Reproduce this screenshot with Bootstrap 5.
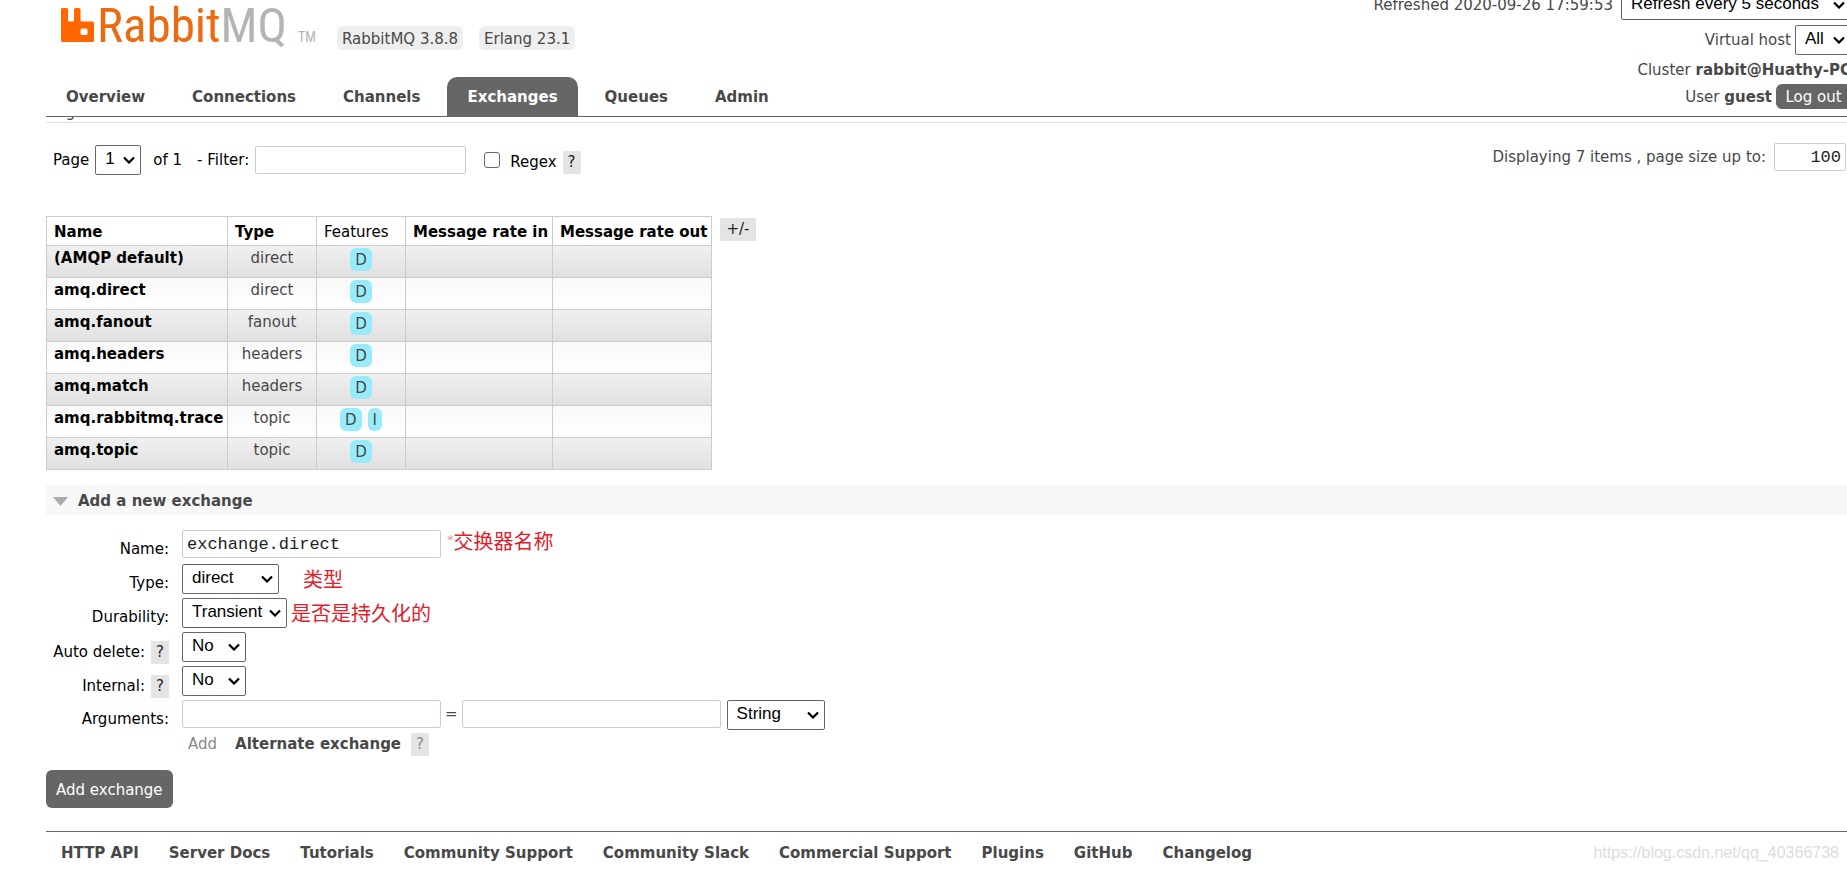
<!DOCTYPE html>
<html lang="en">
<head>
<meta charset="utf-8">
<meta name="viewport" content="width=device-width, initial-scale=1">
<title>RabbitMQ Management</title>
<link href="https://cdn.jsdelivr.net/npm/bootstrap@5.3.0/dist/css/bootstrap.min.css" rel="stylesheet">
<style>
  body { font: 15px/20px "DejaVu Sans", Verdana, sans-serif; color: #484848; background: #fff; overflow-x: hidden; }
  a { color: #484848; text-decoration: none; }
  .page { margin-left: 46px; }
  .top { height: 117px; border-bottom: 1px solid #666; }
  .logo { width: 260px; height: 60px; overflow: visible; }
  .logo text { font-family: "Roboto Condensed", "Liberation Sans", sans-serif; }
  .brand-row { padding-left: 15px; gap: 16px; height: 77px; }
  .version { background: #eee; border-radius: 6px; padding: 3px 5px 1px; height: 24px; margin-top: 26px; }
  .tabs .nav-link { color: #484848; font-weight: bold; padding: 10px 20px 9px; line-height: 20px; border-radius: 10px 10px 0 0; margin-right: 7px; }
  .tabs .nav-link.active { background: #666; color: #fff; }
  .session { margin: -10px -4px 0 0; }
  .session li { min-height: 24px; }
  .session li.tall { min-height: 35px; }
  .session .tall label { padding-top: 5px; }
  .logout { height: 25px; width: 75px; padding: 0; border-radius: 6px; }
  .field, .pick { border-radius: 2px; color: #000; padding: 2px 4px; background-color: #fff; }
  .field { border: 1px solid #ccc; font: 17px/22px "Liberation Mono", monospace; height: 28px; width: 259px; color: #222; }
  .pick { appearance: none; border: 1px solid #666; font: 17px/24px "Liberation Sans", Arial, sans-serif; height: 30px; padding: 0 9px 2px;
    background: #fff url("data:image/svg+xml,%3Csvg xmlns='http://www.w3.org/2000/svg' viewBox='0 0 12 8'%3E%3Cpath d='M1 1.5l5 5 5-5' fill='none' stroke='%23000' stroke-width='2.2'/%3E%3C/svg%3E") no-repeat right 5px center / 12px 8px; }
  .w-46 { width: 46px; } .w-56 { width: 56px; } .w-64 { width: 64px; } .w-97 { width: 97px; } .w-105 { width: 105px; } .w-230 { width: 230px; }
  .w-211 { width: 211px; } .w-72 { width: 72px; } .w-98 { width: 98px; }
  .hint { background: #e4e4e4; color: #222; border: 0; padding: 2px 5px; height: 23px; line-height: 19px; display: inline-block; }
  .clipped { height: 6px; overflow: hidden; border-bottom: 1px solid #ddd; }
  .clipped h2 { font-size: 15px; line-height: 20px; margin: 0 0 0 2px; }
  .pager { padding: 20px 1px 0 7px; height: 93px; color: #000; }
  .pager .paging { padding-top: 2px; gap: 6px; }
  .pager .shown { color: #484848; }
  .count { margin: 0 9px 0 6px; }
  .tick { width: 16px; height: 16px; margin: 0 4px 0 12px; border: 1px solid #666; border-radius: 3px; appearance: none; background: #fff; }
  .list { border-collapse: collapse; table-layout: fixed; width: 666px; color: #484848; }
  .list th, .list td { border: 1px solid #ccc; padding: 2px 7px 0; vertical-align: top; height: 32px; white-space: nowrap; }
  .list thead th { height: 29px; padding-top: 5px; color: #000; }
  .list tbody th a { color: #000; }
  .list tbody tr:nth-child(odd) { background: linear-gradient(#f0f0f0, #e0e0e0); }
  .list tbody tr:nth-child(even) { background: linear-gradient(#f8f8f8, #fff); }
  .list td { text-align: center; }
  .list td .flags { display: flex; justify-content: center; gap: 6px; }
  .list .c-name { width: 181px; } .list .c-short { width: 89px; } .list .c-in { width: 147px; } .list .c-out { width: 159px; }
  .columns-toggle { margin-top: 2px; width: 36px; }
  .flag { background: #98ebfb; border-radius: 6px; padding: 2px 5px; height: 23px; }
  .section-head { background: #f8f8f8; font-size: 15px; line-height: 20px; font-weight: bold; padding: 6px 7px 4px; margin: 15px 0; height: 30px; gap: 10px; }
  .form-grid { display: grid; grid-template-columns: 123px 1fr; column-gap: 13px; grid-auto-rows: 34px; }
  .form-grid label { padding-top: 9px; color: #000; text-align: right; white-space: nowrap; }
  .form-grid .hint { margin-left: 6px; }
  .note { font: 20px/30px "Noto Sans CJK SC", sans-serif; color: #e0202a; }
  .note-high { line-height: 22px; }
  .star { color: #dc9a9a; font-size: 13px; margin-left: 6px; }
  .solid { background: #666; color: #fff; border: 0; }
  .faded { color: #888; }
  .kind { margin-left: 6px; }
  .extra { padding-left: 142px; height: 20px; }
  .extra a { margin: 0 10px 0 18px; }
  .submit { border-radius: 6px; height: 38px; padding: 2px 10px 0; margin-top: 16px; }
  .foot { border-top: 1px solid #666; margin-top: 23px; padding: 11px 8px 0 15px; }
  .foot nav { gap: 30px; font-weight: bold; }
  .watermark { font: 16px/20px "Liberation Sans", Arial, sans-serif; color: #dcdcdc; }
</style>
</head>
<body>
<div class="page">
  <header class="top d-flex justify-content-between">
    <div>
      <div class="brand-row d-flex align-items-start">
        <svg class="logo" viewBox="0 0 260 60" role="img" aria-label="RabbitMQ">
          <path fill="#f60" fill-rule="evenodd" d="M1 8h4.500q1.500 0 1.500 1.500V20q0 1.500 1.500 1.500h3q1.500 0 1.500-1.500V9.500q0-1.500 1.500-1.500h3.500q1.500 0 1.500 1.500V20q0 1.500 1.500 1.500h10.500q1.500 0 1.500 1.500V40.500q0 1.500-1.500 1.500H1.500Q0 42 0 40.500V9.500Q0 8 1 8zM21 28.500q-1.500 0-1.500 1.500v3.500q0 1.500 1.500 1.500h4q1.500 0 1.500-1.500v-3.500q0-1.500-1.500-1.500z"/>
          <text x="36" y="42" font-size="49" fill="#ec6a10">Rabbit<tspan fill="#b4b4b4">MQ</tspan></text>
          <text x="237" y="42" font-size="14" fill="#b4b4b4">TM</text>
        </svg>
        <span class="version">RabbitMQ 3.8.8</span>
        <span class="version">Erlang 23.1</span>
      </div>
      <nav class="tabs nav flex-nowrap">
        <a class="nav-link" href="#">Overview</a>
        <a class="nav-link" href="#">Connections</a>
        <a class="nav-link" href="#">Channels</a>
        <a class="nav-link active" href="#" aria-current="page">Exchanges</a>
        <a class="nav-link" href="#">Queues</a>
        <a class="nav-link" href="#">Admin</a>
      </nav>
    </div>
    <ul class="session list-unstyled text-nowrap">
      <li class="tall d-flex justify-content-end gap-1"><label for="refresh" class="pe-1">Refreshed 2020-09-26 17:59:53</label>
        <select id="refresh" class="pick w-230"><option>Refresh every 5 seconds</option></select></li>
      <li class="tall d-flex justify-content-end gap-1"><label for="vhost">Virtual host</label>
        <select id="vhost" class="pick w-56"><option>All</option></select></li>
      <li class="text-end">Cluster <b>rabbit@Huathy-PC</b></li>
      <li class="d-flex justify-content-end align-items-center gap-1"><span>User <b>guest</b></span>
        <button class="solid logout" type="button">Log out</button></li>
    </ul>
  </header>

  <main>
    <div class="clipped d-flex align-items-end"><h2>Pagination</h2></div>

    <div class="pager d-flex justify-content-between align-items-start">
      <div class="paging d-flex align-items-center">
        <label for="pageno">Page</label>
        <select id="pageno" class="pick w-46"><option>1</option></select>
        <span class="count">of 1</span>
        <label for="filter">- Filter:</label>
        <input id="filter" class="field w-211" type="text">
        <input id="regex" class="tick" type="checkbox">
        <label for="regex" class="pt-1">Regex</label>
        <button class="hint mt-1" type="button">?</button>
      </div>
      <div class="shown d-flex align-items-center gap-2">
        <label for="size">Displaying 7 items , page size up to:</label>
        <input id="size" class="field w-72 text-end" type="text" value="100">
      </div>
    </div>

    <div class="d-flex align-items-start gap-2">
      <table class="list">
        <colgroup><col class="c-name"><col class="c-short"><col class="c-short"><col class="c-in"><col class="c-out"></colgroup>
        <thead><tr><th>Name</th><th>Type</th><th class="fw-normal">Features</th><th>Message rate in</th><th>Message rate out</th></tr></thead>
        <tbody>
          <tr><th><a href="#">(AMQP default)</a></th><td>direct</td><td><div class="flags"><span class="flag">D</span></div></td><td></td><td></td></tr>
          <tr><th><a href="#">amq.direct</a></th><td>direct</td><td><div class="flags"><span class="flag">D</span></div></td><td></td><td></td></tr>
          <tr><th><a href="#">amq.fanout</a></th><td>fanout</td><td><div class="flags"><span class="flag">D</span></div></td><td></td><td></td></tr>
          <tr><th><a href="#">amq.headers</a></th><td>headers</td><td><div class="flags"><span class="flag">D</span></div></td><td></td><td></td></tr>
          <tr><th><a href="#">amq.match</a></th><td>headers</td><td><div class="flags"><span class="flag">D</span></div></td><td></td><td></td></tr>
          <tr><th><a href="#">amq.rabbitmq.trace</a></th><td>topic</td><td><div class="flags"><span class="flag">D</span><span class="flag">I</span></div></td><td></td><td></td></tr>
          <tr><th><a href="#">amq.topic</a></th><td>topic</td><td><div class="flags"><span class="flag">D</span></div></td><td></td><td></td></tr>
        </tbody>
      </table>
      <button class="hint columns-toggle" type="button">+/-</button>
    </div>

    <h2 class="section-head d-flex align-items-center">
      <svg width="15" height="9" viewBox="0 0 15 9" aria-hidden="true"><path d="M0 0h15L7.500 9z" fill="#aaa"/></svg>
      Add a new exchange
    </h2>

    <form>
      <div class="form-grid">
        <label for="name">Name:</label>
        <div class="d-flex align-items-start"><input id="name" class="field" type="text" value="exchange.direct"><span class="star">*</span><span class="note note-high">交换器名称</span></div>
        <label for="type">Type:</label>
        <div class="d-flex align-items-start"><select id="type" class="pick w-97"><option>direct</option></select><span class="note ms-4">类型</span></div>
        <label for="durability">Durability:</label>
        <div class="d-flex align-items-start"><select id="durability" class="pick w-105"><option>Transient</option></select><span class="note ms-1">是否是持久化的</span></div>
        <label for="autodel">Auto delete:<span class="hint">?</span></label>
        <div><select id="autodel" class="pick w-64"><option>No</option></select></div>
        <label for="internal">Internal:<span class="hint">?</span></label>
        <div><select id="internal" class="pick w-64"><option>No</option></select></div>
        <label for="argkey">Arguments:</label>
        <div class="d-flex align-items-start">
          <input id="argkey" class="field" type="text">
          <span class="px-1 pt-1">=</span>
          <input class="field" type="text" aria-label="Argument value">
          <select class="pick w-98 kind" aria-label="Argument type"><option>String</option></select>
        </div>
      </div>
      <div class="extra d-flex align-items-center">
        <span class="faded">Add</span>
        <a class="fw-bold" href="#">Alternate exchange</a>
        <button class="hint faded" type="button">?</button>
      </div>
      <button class="solid submit" type="button">Add exchange</button>
    </form>
  </main>

  <footer class="foot d-flex justify-content-between">
    <nav class="d-flex text-nowrap">
      <a href="#">HTTP API</a><a href="#">Server Docs</a><a href="#">Tutorials</a><a href="#">Community Support</a><a href="#">Community Slack</a><a href="#">Commercial Support</a><a href="#">Plugins</a><a href="#">GitHub</a><a href="#">Changelog</a>
    </nav>
    <span class="watermark">https://blog.csdn.net/qq_40366738</span>
  </footer>
</div>
<script src="https://cdn.jsdelivr.net/npm/bootstrap@5.3.0/dist/js/bootstrap.bundle.min.js"></script>
</body>
</html>
